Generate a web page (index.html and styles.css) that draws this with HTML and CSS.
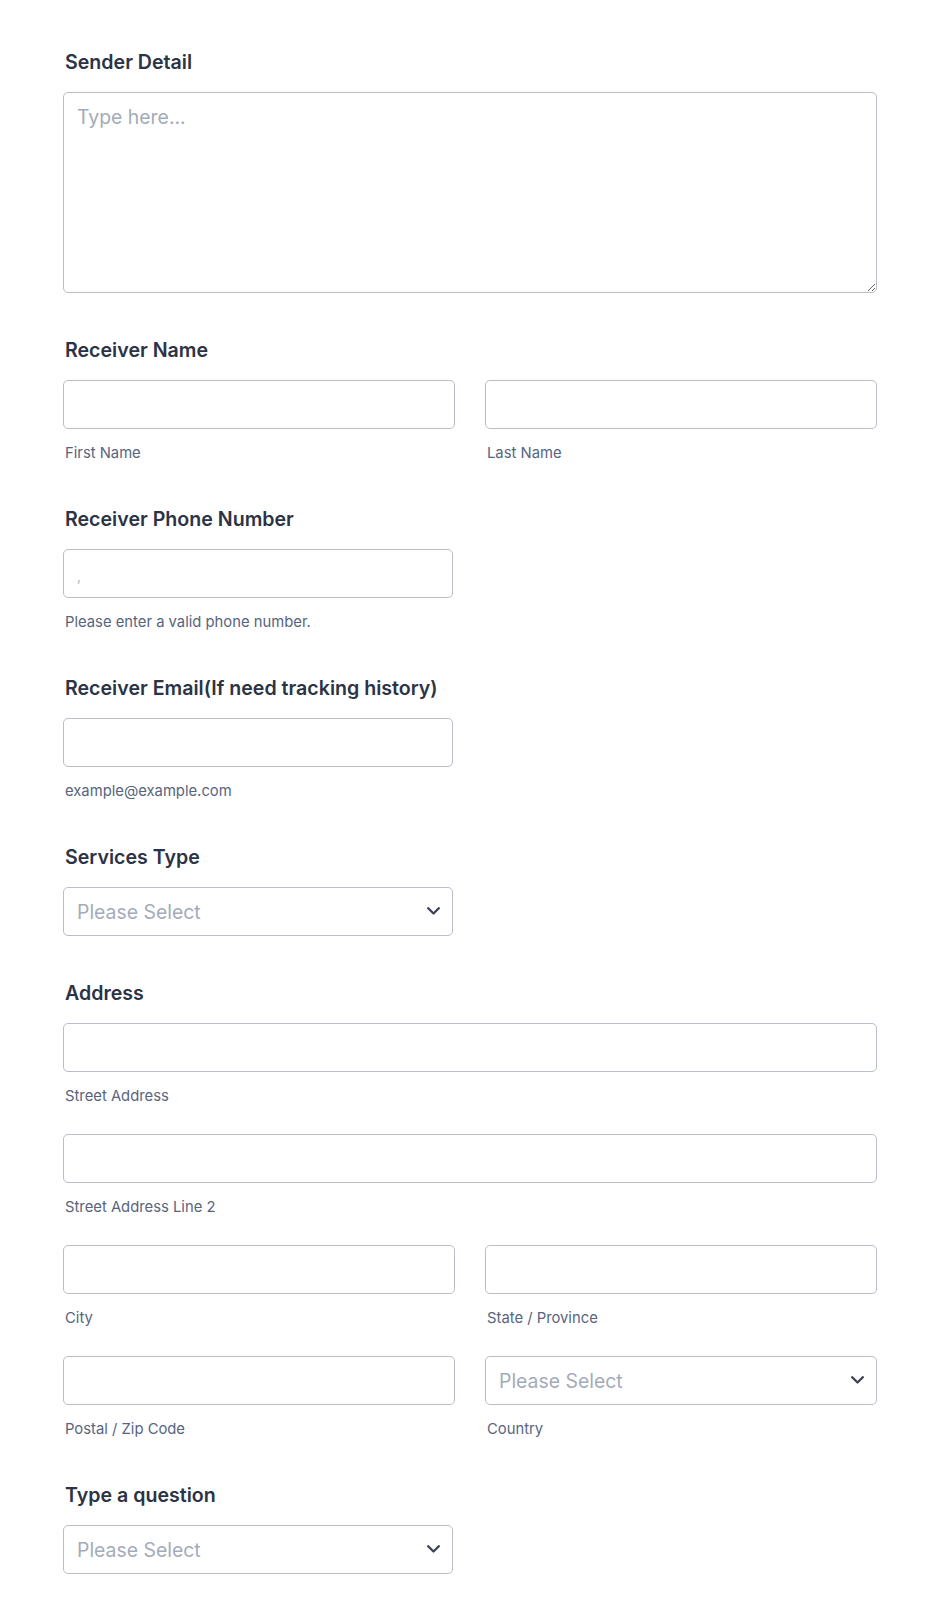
FILE: index.html
```html
<!DOCTYPE html>
<html lang="en">
<head>
<meta charset="utf-8">
<title>Shipment Form</title>
<link rel="stylesheet" href="styles.css">
</head>
<body>
<form class="form">
  <div class="field">
    <label class="label">Sender Detail</label>
    <textarea class="control textarea" placeholder="Type here..."></textarea>
  </div>

  <div class="field">
    <label class="label">Receiver Name</label>
    <div class="row">
      <div class="cell">
        <input class="control" type="text">
        <div class="sub">First Name</div>
      </div>
      <div class="cell">
        <input class="control" type="text">
        <div class="sub">Last Name</div>
      </div>
    </div>
  </div>

  <div class="field">
    <label class="label">Receiver Phone Number</label>
    <input class="control half phone" type="tel" placeholder=",">
    <div class="sub">Please enter a valid phone number.</div>
  </div>

  <div class="field">
    <label class="label">Receiver Email(If need tracking history)</label>
    <input class="control half" type="email">
    <div class="sub">example@example.com</div>
  </div>

  <div class="field">
    <label class="label">Services Type</label>
    <div class="select-wrap half">
      <select class="control select"><option>Please Select</option></select>
      <svg class="chev" viewBox="0 0 13 8" width="13" height="8"><path d="M1.2 1.2 L6.5 6.5 L11.8 1.2" fill="none" stroke="#3d4354" stroke-width="2.3" stroke-linecap="round" stroke-linejoin="round"/></svg>
    </div>
  </div>

  <div class="field">
    <label class="label">Address</label>
    <div class="addr">
      <div class="cell">
        <input class="control" type="text">
        <div class="sub">Street Address</div>
      </div>
      <div class="cell">
        <input class="control" type="text">
        <div class="sub">Street Address Line 2</div>
      </div>
      <div class="row">
        <div class="cell">
          <input class="control" type="text">
          <div class="sub">City</div>
        </div>
        <div class="cell">
          <input class="control" type="text">
          <div class="sub">State / Province</div>
        </div>
      </div>
      <div class="row">
        <div class="cell">
          <input class="control" type="text">
          <div class="sub">Postal / Zip Code</div>
        </div>
        <div class="cell">
          <div class="select-wrap">
            <select class="control select"><option>Please Select</option></select>
            <svg class="chev" viewBox="0 0 13 8" width="13" height="8"><path d="M1.2 1.2 L6.5 6.5 L11.8 1.2" fill="none" stroke="#3d4354" stroke-width="2.3" stroke-linecap="round" stroke-linejoin="round"/></svg>
          </div>
          <div class="sub">Country</div>
        </div>
      </div>
    </div>
  </div>

  <div class="field">
    <label class="label">Type a question</label>
    <div class="select-wrap half">
      <select class="control select"><option>Please Select</option></select>
      <svg class="chev" viewBox="0 0 13 8" width="13" height="8"><path d="M1.2 1.2 L6.5 6.5 L11.8 1.2" fill="none" stroke="#3d4354" stroke-width="2.3" stroke-linecap="round" stroke-linejoin="round"/></svg>
    </div>
  </div>
</form>
</body>
</html>
```

FILE: styles.css
```css
* {
  box-sizing: border-box;
}

body {
  margin: 0;
  background: #ffffff;
  font-family: Inter, "Noto Sans", "Liberation Sans", sans-serif;
  color: #2c3345;
}

.form {
  width: 814px;
  margin-left: 63px;
  padding-top: 50px;
}

.field {
  margin-bottom: 45px;
}

.label {
  display: block;
  font-size: 19.6px;
  line-height: 24px;
  font-weight: 600;
  color: #2c3345;
  padding-left: 2px;
  margin-bottom: 18px;
}

.control {
  display: block;
  width: 100%;
  height: 49px;
  margin: 0;
  border: 1px solid #b8bdc9;
  border-radius: 5px;
  background: #ffffff;
  font-family: inherit;
  font-size: 19.4px;
  color: #2c3345;
  padding: 0 13px;
  outline: none;
}

.control::placeholder {
  color: #a3abba;
  opacity: 1;
}

.textarea {
  height: 201px;
  padding: 12px 13px;
  line-height: 24px;
  resize: vertical;
}

.half {
  width: 390px;
}

.phone::placeholder {
  font-size: 14px;
  color: #b3b9c5;
}

.row {
  display: grid;
  grid-template-columns: 1fr 1fr;
  column-gap: 30px;
}

.addr {
  display: flex;
  flex-direction: column;
  gap: 29px;
}

.sub {
  font-size: 14.8px;
  line-height: 18px;
  color: #57647e;
  margin-top: 15px;
  padding-left: 2px;
}

.select-wrap {
  position: relative;
}

.select {
  appearance: none;
  -webkit-appearance: none;
  color: #a3abba;
  padding-right: 40px;
}

.chev {
  position: absolute;
  right: 13px;
  top: 20px;
  pointer-events: none;
}
```
